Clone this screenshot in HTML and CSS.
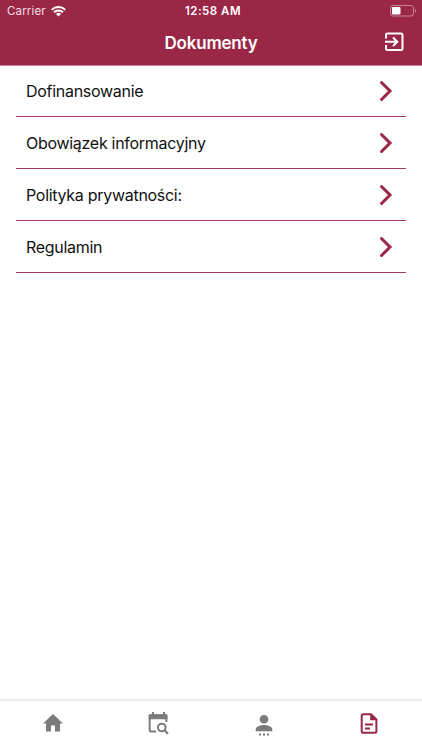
FILE: index.html
```html
<!DOCTYPE html>
<html lang="pl">
  <head>
    <meta charset="UTF-8" />
    <meta name="viewport" content="width=device-width, initial-scale=1.0" />
    <title>Dokumenty</title>
    <link rel="stylesheet" href="styles.css">
  </head>

  <body>
    <header class="header">
      <div class="status-bar">
        <div class="carrier">
          <span class="carrier-name">Carrier</span>
          <svg width="15" height="11" viewBox="0 0 15 11" fill="none" stroke="#fff" stroke-width="2">
            <path d="M0.7 3.9a9.7 9.7 0 0 1 13.6 0" />
            <path d="M3 6.3a6.4 6.4 0 0 1 9 0" />
            <path d="M5 8a3.6 3.6 0 0 1 5 0L7.5 10.5z" fill="#fff" stroke="none" />
          </svg>
        </div>
        <span class="clock">12:58 AM</span>
        <svg class="battery" width="27" height="12" viewBox="0 0 27 12">
          <rect x="0.5" y="0.5" width="23" height="10.5" rx="2.5" fill="none" stroke="#c98598" />
          <rect x="2" y="2" width="8.5" height="7.5" rx="1" fill="#fff" />
          <path d="M25 4v3.6c1.6-.5 1.6-3.1 0-3.6z" fill="#c98598" />
        </svg>
      </div>
      <div class="title-bar">
        <h1>Dokumenty</h1>
        <button class="logout-btn" aria-label="Wyloguj">
          <svg width="20" height="20" viewBox="0 0 20 20" fill="none" stroke="#fff" stroke-width="2">
            <path d="M2 6.5V3a1.5 1.5 0 0 1 1.5-1.5H17A1.5 1.5 0 0 1 18.5 3v13.5A1.5 1.5 0 0 1 17 18H3.5A1.5 1.5 0 0 1 2 16.5V13" />
            <path d="M1 9.8h12M9 5.5l4.3 4.3L9 14.1" />
          </svg>
        </button>
      </div>
    </header>

    <main class="documents">
      <a class="document">
        <span class="document-name">Dofinansowanie</span>
        <svg class="chevron" viewBox="0 0 14 22"><path d="M2.5 2.5L11 11l-8.5 8.5" /></svg>
      </a>
      <a class="document">
        <span class="document-name">Obowiązek informacyjny</span>
        <svg class="chevron" viewBox="0 0 14 22"><path d="M2.5 2.5L11 11l-8.5 8.5" /></svg>
      </a>
      <a class="document">
        <span class="document-name">Polityka prywatności:</span>
        <svg class="chevron" viewBox="0 0 14 22"><path d="M2.5 2.5L11 11l-8.5 8.5" /></svg>
      </a>
      <a class="document">
        <span class="document-name">Regulamin</span>
        <svg class="chevron" viewBox="0 0 14 22"><path d="M2.5 2.5L11 11l-8.5 8.5" /></svg>
      </a>
    </main>

    <nav class="tabs">
      <a class="tab">
        <svg width="24" height="24" viewBox="0 0 24 24" fill="currentColor">
          <path d="M10 20.5v-6h4v6h5v-8h3L12 3 2 12.5h3v8z" />
        </svg>
      </a>
      <a class="tab">
        <svg width="24" height="24" viewBox="0 0 24 24" fill="none" stroke="currentColor" stroke-width="2">
          <path d="M10 20.5H5.2A1.5 1.5 0 0 1 3.7 19V4.5h16.7V11" />
          <path d="M2.7 5a1.7 1.7 0 0 1 1.7-1.7h15.3A1.7 1.7 0 0 1 21.4 5v3.2H2.7z" fill="currentColor" stroke="none" />
          <path d="M7 1v3M18 1v3" />
          <circle cx="15.8" cy="16.5" r="3.8" />
          <path d="M18.5 19.2l3.5 3.5" stroke-width="2.2" />
        </svg>
      </a>
      <a class="tab">
        <svg width="24" height="24" viewBox="0 0 24 24" fill="currentColor">
          <circle cx="12" cy="8.3" r="4.3" />
          <path d="M3.7 20.3v-1.8c0-3 4.3-4.5 8.3-4.5s8.3 1.5 8.3 4.5v1.8z" />
          <path d="M7 22.5h2v2H7zM11 22.5h2v2h-2zM15 22.5h2v2h-2z" />
        </svg>
      </a>
      <a class="tab active">
        <svg width="24" height="24" viewBox="0 0 24 24" fill="none" stroke="currentColor" stroke-width="2">
          <path d="M14 3.2H6.2a1.5 1.5 0 0 0-1.5 1.5v15.6a1.5 1.5 0 0 0 1.5 1.5h11.7a1.5 1.5 0 0 0 1.5-1.5V8.5z" />
          <path d="M13.2 2.8v6.4h6.5z" fill="currentColor" stroke="none" />
          <path d="M8 13.5h8M8 17.5h5" />
        </svg>
      </a>
    </nav>
  </body>
</html>
```
FILE: styles.css
```css
* {
  box-sizing: border-box;
}

body {
  display: flex;
  flex-direction: column;
  height: 100vh;
  margin: 0;
  font-family: Inter, sans-serif;
  background-color: #ffffff;
  color: #111;
  overflow: hidden;
}

svg {
  display: block;
  overflow: visible;
}

.header {
  height: 66px;
  background-color: #9a2746;
  border-bottom: 1px solid #c58597;
  color: #ffffff;
}

.status-bar {
  display: grid;
  grid-template-columns: 1fr auto 1fr;
  align-items: center;
  height: 22px;
  padding: 0 5px 0 7px;
  font-size: 11.5px;
}

.carrier {
  display: flex;
  align-items: center;
  gap: 5px;
}

.carrier-name {
  width: 39px;
  color: #f3dfe5;
  letter-spacing: 0.15px;
}

.clock {
  padding-left: 2px;
  font-weight: 600;
  letter-spacing: 0.5px;
}

.battery {
  justify-self: end;
}

.title-bar {
  display: grid;
  grid-template-columns: 1fr auto 1fr;
  align-items: center;
  height: 43px;
  padding: 0 18px 3px;
}

h1 {
  grid-column: 2;
  margin: 0;
  padding-top: 2px;
  font-size: 17px;
  font-weight: 600;
  letter-spacing: -0.2px;
}

.logout-btn {
  justify-self: end;
  padding: 0;
  background: none;
  border: none;
  cursor: pointer;
}

.documents {
  flex: 1;
  padding: 0 16px;
  margin-top: -1px;
}

.document {
  display: flex;
  align-items: center;
  justify-content: space-between;
  height: 52px;
  padding: 0 13px 0 10px;
  border-bottom: 1px solid #a33c59;
  font-size: 16px;
  cursor: pointer;
}

.document-name {
  letter-spacing: -0.29px;
}

.chevron {
  width: 14px;
  height: 22px;
  fill: none;
  stroke: #9a2746;
  stroke-width: 3;
  stroke-linecap: round;
}

.tabs {
  display: flex;
  height: 51px;
  border-top: 2px solid #ececec;
}

.tab {
  display: flex;
  flex: 1;
  align-items: center;
  justify-content: center;
  padding-bottom: 5px;
  color: #7b7b7b;
}

.tab.active {
  color: #9a2746;
}
```
